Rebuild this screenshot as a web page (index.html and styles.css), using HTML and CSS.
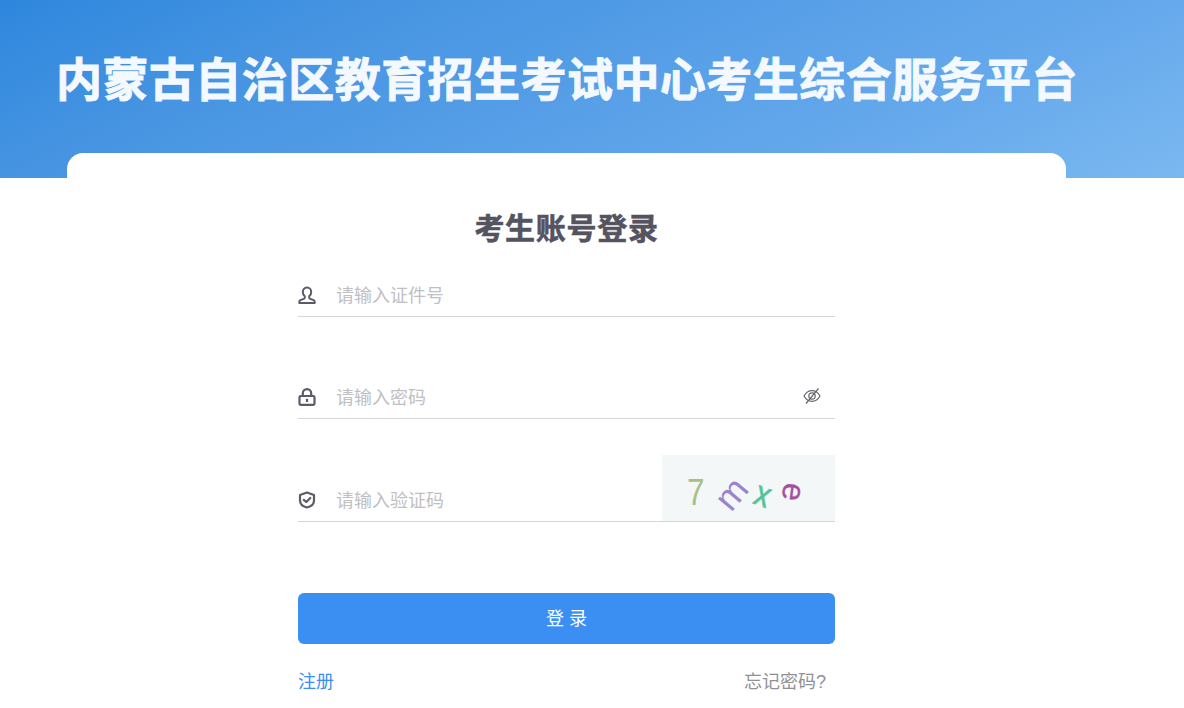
FILE: index.html
```html
<!DOCTYPE html>
<html lang="zh-CN">
<head>
<meta charset="utf-8">
<title>考生账号登录</title>
<link rel="stylesheet" href="styles.css">
</head>
<body>
<header class="banner">
  <h1 class="banner-title">内蒙古自治区教育招生考试中心考生综合服务平台</h1>
</header>
<main class="card">
  <h2 class="card-title">考生账号登录</h2>
  <form class="form">
    <div class="field">
      <svg class="field-icon" viewBox="0 0 18 18" fill="none" stroke="#5a5a68" stroke-width="2" stroke-linejoin="round"><path d="M9 1.500c-2.600 0-4.200 2-4.200 4.400 0 1.900.9 3.500 2 4.400v1.200c0 .6-.4 1-1 1.300l-3.400 1.400c-.8.4-1.100 1-1.100 1.800v1h15.400v-1c0-.8-.3-1.400-1.100-1.800l-3.400-1.400c-.6-.3-1-.7-1-1.300v-1.200c1.100-.9 2-2.500 2-4.400 0-2.400-1.600-4.400-4.200-4.400z"/></svg>
      <span class="placeholder">请输入证件号</span>
    </div>
    <div class="field">
      <svg class="field-icon" viewBox="0 0 18 18" fill="none" stroke="#5a5a68" stroke-width="2.200"><path d="M4.800 8V5.300a4.200 4.200 0 0 1 8.400 0V8"/><rect x="1.500" y="8" width="15" height="8.800" rx="1.200"/><path d="M9 10.800v3.200"/></svg>
      <span class="placeholder">请输入密码</span>
      <svg class="eye" viewBox="0 0 20 20" fill="none" stroke="#66666c" stroke-width="1.200"><path d="M2 10c1.900-3.400 4.700-5.300 8-5.300s6.100 1.900 8 5.300c-1.900 3.400-4.700 5.300-8 5.300S3.900 13.400 2 10z"/><circle cx="10" cy="10" r="3.200"/><path d="M4 17.500 16.500 2.500"/></svg>
    </div>
    <div class="field field-captcha">
      <svg class="field-icon icon-shield" viewBox="0 0 18 18" fill="none" stroke="#5a5a68" stroke-width="2.200" stroke-linejoin="round" stroke-linecap="round"><path d="M9 1.500 16 4v5.500c0 3.500-3 6-7 7-4-1-7-3.500-7-7V4z"/><path d="M5.800 8.800 8.300 11l4-4"/></svg>
      <span class="placeholder">请输入验证码</span>
      <svg class="captcha" viewBox="0 0 173 66">
        <text class="captcha-seven" transform="translate(25 50) scale(.85 1)">7</text>
        <text class="captcha-m" transform="translate(69 58) rotate(-50)">m</text>
        <text class="captcha-x" transform="translate(90 48) rotate(20) scale(1 1.200)">x</text>
        <text class="captcha-e" transform="translate(122 27) rotate(97)">e</text>
      </svg>
    </div>
    <button class="submit" type="button">登 录</button>
    <div class="links">
      <a class="link-register">注册</a>
      <a class="link-forgot">忘记密码?</a>
    </div>
  </form>
</main>
</body>
</html>
```

FILE: styles.css
```css
* { box-sizing: border-box; }
html, body { margin: 0; height: 708px; overflow: hidden; background: #fff; }
body { font-family: "Liberation Sans", "Noto Sans CJK SC", sans-serif; }

.banner {
  height: 178px;
  padding: 51px 0 0 56px;
  background: linear-gradient(155deg, #2e87dd 0%, #4694e2 25%, #66a9ec 75%, #7ab8f0 100%);
}
.banner-title {
  margin: 0;
  font-size: 46px;
  line-height: 58px;
  font-weight: 700;
  letter-spacing: .45px;
  color: #f3f9fe;
  white-space: nowrap;
  -webkit-text-stroke: .9px #f3f9fe;
}

.card {
  width: 999px;
  height: 555px;
  margin: -25px 0 0 67px;
  padding-top: 56px;
  background: #fff;
  border-radius: 16px 16px 0 0;
}
.card-title {
  margin: 0;
  text-align: center;
  font-size: 30px;
  line-height: 40px;
  font-weight: 700;
  letter-spacing: .7px;
  color: #54535f;
  -webkit-text-stroke: .6px #54535f;
}

.form { width: 537px; margin: 15px auto 0; }
.field {
  display: flex;
  align-items: center;
  height: 53px;
  margin-bottom: 49px;
  padding-top: 7px;
  border-bottom: 1px solid #d6d6d8;
}
.field-icon { width: 18px; height: 18px; flex: none; margin: 2px 20px 0 0; }
.placeholder { font-size: 18px; color: #c0c0c3; }
.eye { width: 20px; height: 20px; flex: none; margin-left: auto; margin-right: 13px; }

.field-captcha { position: relative; height: 54px; margin-bottom: 71px; }
.icon-shield { margin-top: 4px; }
.field-captcha .placeholder { margin-top: 2px; }
.captcha {
  position: absolute;
  right: 0;
  bottom: 0;
  width: 173px;
  height: 66px;
  background: #f3f7f8;
}
.captcha text { font-family: "Liberation Sans", sans-serif; }
.captcha-seven { font-size: 37px; fill: #a9c084; }
.captcha-m { font-size: 36px; fill: #9a85cc; }
.captcha-x { font-size: 30px; fill: #52c49a; stroke: #52c49a; stroke-width: .5px; }
.captcha-e { font-size: 32px; fill: #a5509c; stroke: #a5509c; stroke-width: .3px; }

.submit {
  display: block;
  width: 100%;
  height: 51px;
  padding: 0 0 3px;
  border: 0;
  border-radius: 6px;
  background: #3b8ef2;
  color: #fff;
  font: 18px "Liberation Sans", "Noto Sans CJK SC", sans-serif;
}

.links {
  display: flex;
  justify-content: space-between;
  margin-top: 26px;
  padding-right: 9px;
  font-size: 18px;
  line-height: 24px;
}
.link-register { color: #3b8ef2; }
.link-forgot { color: #919195; }
```
